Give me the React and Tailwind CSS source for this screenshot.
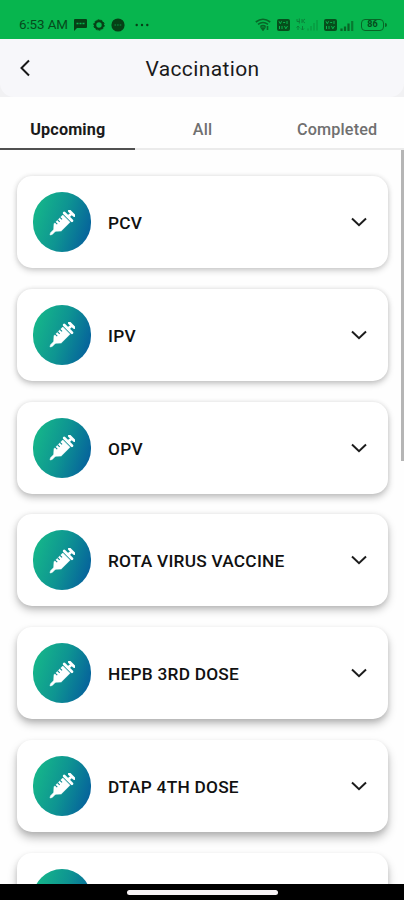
import React from 'react';

// Shadows get deeper towards the bottom of the screen
const vaccines = [
    { name: 'PCV', shadow: 'shadow-[0_3px_6px_rgba(0,0,0,0.17),0_0_5px_rgba(0,0,0,0.10)]' },
    { name: 'IPV', shadow: 'shadow-[0_3px_6px_rgba(0,0,0,0.21),0_0_5px_rgba(0,0,0,0.10)]' },
    { name: 'OPV', shadow: 'shadow-[0_4px_7px_rgba(0,0,0,0.22),0_0_5px_rgba(0,0,0,0.10)]' },
    { name: 'ROTA VIRUS VACCINE', shadow: 'shadow-[0_4px_8px_rgba(0,0,0,0.25),0_1px_5px_rgba(0,0,0,0.09)]' },
    { name: 'HEPB 3RD DOSE', shadow: 'shadow-[0_5px_9px_rgba(0,0,0,0.25),0_2px_5px_rgba(0,0,0,0.09)]' },
    { name: 'DTAP 4TH DOSE', shadow: 'shadow-[0_6px_10px_rgba(0,0,0,0.26),0_2px_5px_rgba(0,0,0,0.09)]' },
    { name: '', shadow: 'shadow-[0_6px_10px_rgba(0,0,0,0.26),0_2px_5px_rgba(0,0,0,0.09)]' },
];

const App = () => {
    return (
        <div className="flex h-[900px] w-[404px] flex-col overflow-hidden bg-[#fefefe] font-[Roboto,sans-serif]">
            <StatusBar />

            {/* Header */}
            <div className="shrink-0 bg-[#f1f1f3]">
                <header className="grid h-[58px] grid-cols-[1fr_auto_1fr] items-center rounded-b-[14px] bg-[#f7f7fa]">
                    <svg className="ml-[19px] h-[18px] w-[12px]" viewBox="0 0 12 18" fill="none" stroke="#181818" strokeWidth="2">
                        <path d="M10 1.5 2.5 9l7.5 7.5" />
                    </svg>
                    <h1 className="pt-[2px] pl-px text-[21px] leading-7 tracking-[0.38px] text-[#1a1a1a]">Vaccination</h1>
                </header>
            </div>

            {/* Tabs */}
            <nav className="grid h-[53px] shrink-0 grid-cols-3 text-center text-[16.2px] leading-6 font-medium tracking-[0.17px] text-[#707070]">
                <a href="#" className="border-b-2 border-[#505050] pt-[21px] pl-px font-bold text-[#1a1a1a]">Upcoming</a>
                <a href="#" className="border-b-2 border-[#ebebeb] pt-[21px] pl-px">All</a>
                <a href="#" className="border-b-2 border-[#ebebeb] pt-[21px] pl-px">Completed</a>
            </nav>

            {/* Vaccine list */}
            <main className="flex min-h-0 flex-1 overflow-hidden">
                <ul className="flex flex-1 flex-col gap-[20.8px] pt-[26px] pl-[17px]">
                    {vaccines.map((vaccine) => (
                        <VaccineCard key={vaccine.name} name={vaccine.name} shadow={vaccine.shadow} />
                    ))}
                </ul>
                <div className="h-[311px] w-[3px] bg-[#b5b5b5]" />
            </main>

            {/* Gesture bar */}
            <footer className="flex h-4 shrink-0 justify-center bg-black pt-[6px]">
                <div className="h-[5px] w-[151px] rounded-full bg-[#f8f4f6]" />
            </footer>
        </div>
    );
};

const VaccineCard = ({ name, shadow }) => (
    <li className={`flex h-[92px] w-[371px] shrink-0 items-center rounded-[15px] bg-white pr-[21px] pl-4 ${shadow}`}>
        <div className="flex h-[60px] w-[58px] items-center justify-center rounded-full bg-linear-[108deg,#16b989_5%,#0e9492_50%,#055d9d_95%]">
            <Syringe />
        </div>
        <span className="ml-[17px] flex-1 pt-[2px] text-[17.3px] leading-6 font-medium tracking-[0.24px] text-[#111]">{name}</span>
        <svg className="h-[10px] w-4" viewBox="0 0 16 10" fill="none" stroke="#1c1c1c" strokeWidth="2">
            <path d="m1 1.5 7 6.7 7-6.7" />
        </svg>
    </li>
);

const Syringe = () => (
    <svg className="mt-[2px] mr-[2px] h-[27px] w-[27px]" viewBox="0 0 27 27" fill="none">
        <g transform="rotate(45 13.5 13.5)">
            {/* plunger */}
            <path d="M10.2-1h6.6M13.5-1v5" stroke="#fff" strokeWidth="2.8" strokeLinecap="round" />
            <path d="M8 4.2h11" stroke="#fff" strokeWidth="2.8" strokeLinecap="round" />
            {/* barrel and needle */}
            <path d="M8.4 6.6h10.2v12.4l-3.2 3.6-.7 1v4.2l-1.2 2-1.2-2v-4.2l-.7-1-3.2-3.6z" fill="#fff" stroke="#fff" strokeWidth=".5" strokeLinejoin="round" />
            <path d="M8 10.2h3M8 13.6h3M8 17h3" stroke="#0c8c93" strokeWidth="1.1" />
        </g>
    </svg>
);

const StatusBar = () => (
    <div className="flex h-[39px] shrink-0 items-center bg-[#07b54e] pt-[10px] pr-[17px] pl-[19px] text-[13px] text-[#064a1c]">
        <span className="w-[49px] pt-px text-[13.4px] tracking-[-0.1px] whitespace-nowrap">6:53 AM</span>
        <svg className="ml-[6px] h-3 w-[13px]" viewBox="0 0 13 12">
            <path d="M1 0h11q1 0 1 1v7q0 1-1 1H3l-3 3V1q0-1 1-1z" fill="#064016" />
            <path d="M2.5 4.5h8" stroke="#07b54e" strokeWidth="1.5" strokeDasharray="2 1" />
        </svg>
        <svg className="ml-[6px] h-3 w-3" viewBox="0 0 12 12">
            <circle cx="6" cy="6" r="3.9" fill="none" stroke="#064016" strokeWidth="2.4" />
            <circle cx="6" cy="6" r="5.2" fill="none" stroke="#064016" strokeWidth="1" strokeDasharray="2 1.2" />
        </svg>
        <svg className="ml-[6px] h-[14px] w-[14px]" viewBox="0 0 14 14">
            <circle cx="7" cy="7" r="6.6" fill="#064016" />
            <path d="M3.5 7h7" stroke="#087a34" strokeWidth="1.4" strokeDasharray="1.6 1" />
        </svg>
        <svg className="ml-[10px] h-1 w-[14px]" viewBox="0 0 14 4" fill="#064016">
            <circle cx="1.7" cy="2" r="1.2" />
            <circle cx="7" cy="2" r="1.2" />
            <circle cx="12.3" cy="2" r="1.2" />
        </svg>

        <svg className="ml-auto h-[13px] w-4" viewBox="0 0 16 13" fill="none" stroke="#086526" strokeWidth="1.6">
            <path d="M.8 4Q8-1.5 15.2 4M3 6.4Q8 2.5 13 6.4M5.3 8.7Q8 6.5 10.7 8.7" />
            <path d="m6.5 10 1.5 2 1.5-2zM12.5 8v4" />
        </svg>
        <SimBadge />
        <svg className="ml-[6px] h-[13px] w-[22px] text-[#0a8138]" viewBox="0 0 22 13" fill="none" stroke="currentColor">
            <path d="M1 1v2.5h3M3.3.5v5M6 1v4M9 1 6.5 3 9 5M2 12V8M.5 9.5 2 8l1.5 1.5M6.5 8v4M5 10.5 6.5 12 8 10.5" />
            <path d="M12 12.5v-2M15 12.5V8M18 12.5V5M21 12.5V2" strokeWidth="1.8" opacity=".4" />
        </svg>
        <SimBadge />
        <svg className="ml-[3px] h-3 w-[14px]" viewBox="0 0 14 12" stroke="#086526" strokeWidth="2.2">
            <path d="M1.5 12V9.5M5 12V7.5M8.5 12V4.5" />
            <path d="M12.2 12V2" opacity=".75" />
        </svg>
        <div className="ml-[7px] flex h-[12px] w-[23px] items-center justify-center rounded-[4px] border-[1.5px] border-[#086526] text-[9px] leading-none font-bold">86</div>
        <div className="ml-px h-1 w-[2px] rounded-r bg-[#086526]" />
    </div>
);

const SimBadge = () => (
    <svg className="ml-[6px] h-3 w-[13px]" viewBox="0 0 13 12">
        <rect width="13" height="12" rx="2" fill="#064f1c" />
        <path d="m2 2.3 1.3 2.4 1.3-2.4M6.2 3.5h2M10 2v3M2.5 7v3M5 7v3M7.5 7l1.3 2.8L10.5 7" fill="none" stroke="#07b54e" strokeWidth="1" />
    </svg>
);

export default App;
